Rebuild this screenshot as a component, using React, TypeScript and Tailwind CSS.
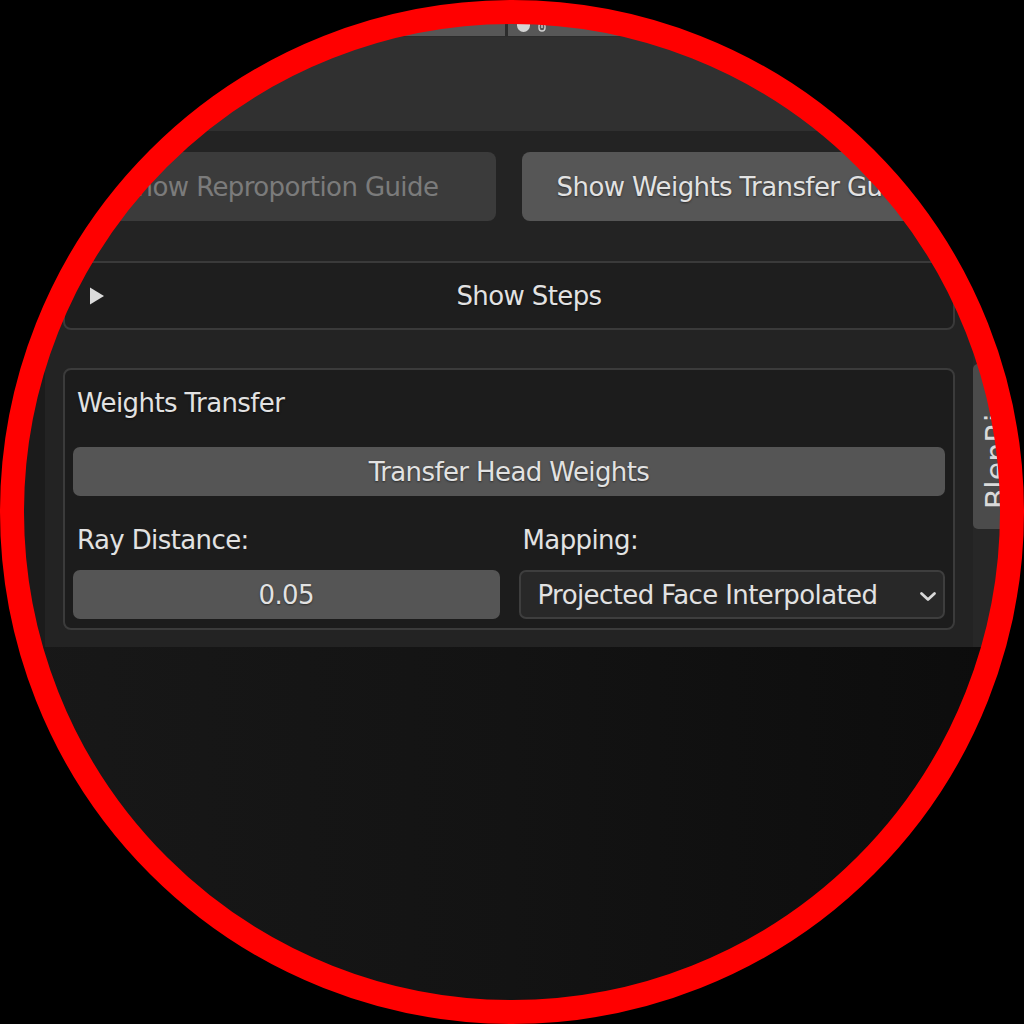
import React from "react";

function Triangle() {
  return (
    <svg width="16" height="18" viewBox="0 0 16 18" className="shrink-0">
      <polygon points="1,0.5 15,9 1,17.5" fill="#dcdcdc" />
    </svg>
  );
}

function Chevron() {
  return (
    <svg width="18" height="11" viewBox="0 0 18 11" className="shrink-0 mt-[4px]">
      <polyline points="2.5,2.5 9,8.5 15.5,2.5" fill="none" stroke="#d8d8d8" strokeWidth="2.8" strokeLinecap="round" strokeLinejoin="round" />
    </svg>
  );
}

export default function App() {
  return (
    <div className="relative w-[1024px] h-[1024px] bg-black overflow-hidden">
      <div className="w-full h-full flex flex-col [clip-path:circle(491px_at_512px_512px)] font-['DejaVu_Sans','Noto_Sans',sans-serif] text-[26px] leading-[30px] tracking-[-0.6px] text-[#e2e2e2]">
        {/* top strip */}
        <div className="h-[37px] shrink-0 flex bg-[#575757] border-b border-[#2c2c2c]">
          <div className="w-[505px]" />
          <div className="w-[3px] bg-[#2c2c2c]" />
          <div className="flex items-end gap-[8px] pl-[9px] pb-[4px]">
            <svg width="13" height="11" viewBox="0 0 13 11">
              <path d="M0 0 H13 V4.5 A6.5 6.5 0 0 1 0 4.5 Z" fill="#d4d4d4" />
            </svg>
            <svg width="8" height="10" viewBox="0 0 8 10">
              <rect x="1" y="1" width="6" height="8" rx="3" fill="none" stroke="#cfcfcf" strokeWidth="1.4" />
              <rect x="3.3" y="3" width="1.4" height="3" fill="#cfcfcf" />
            </svg>
          </div>
        </div>

        {/* header region */}
        <div className="h-[94px] shrink-0 bg-[#303030]" />

        {/* viewport + sidebar */}
        <div className="flex-1 bg-gradient-to-r from-[#181818] via-[#131313] to-[#0c0c0c]">
          <div className="flex h-[516px]">
            <div className="w-[45px] shrink-0 bg-[#1b1b1b]" />
            <div className="w-[928px] shrink-0 bg-[#232323] px-[18px] pt-[21px] flex flex-col">
              {/* guide buttons */}
              <div className="grid grid-cols-2 gap-[26px] h-[69px]">
                <div className="rounded-[8px] bg-[#3b3b3b] text-[#7b7b7b] flex items-center justify-center whitespace-nowrap">
                  Show Reproportion Guide
                </div>
                <div className="rounded-[8px] bg-[#565656] flex items-center justify-center whitespace-nowrap [text-shadow:0_1px_2px_rgba(0,0,0,0.5)]">
                  Show Weights Transfer Guide
                </div>
              </div>

              {/* show steps */}
              <div className="mt-[40px] h-[69px] rounded-[8px] border-2 border-[#3a3a3a] bg-[#1e1e1e] flex items-center pl-[24px]">
                <Triangle />
                <span className="flex-1 text-center [text-shadow:0_1px_2px_rgba(0,0,0,0.5)]">Show Steps</span>
              </div>

              {/* weights transfer box */}
              <div className="mt-[38px] h-[262px] rounded-[8px] border-2 border-[#3b3b3b] bg-[#1c1c1c] px-[8px] pt-[18px] flex flex-col">
                <div className="h-[30px] pl-[4px] [text-shadow:0_1px_2px_rgba(0,0,0,0.5)]">Weights Transfer</div>
                <div className="mt-[29px] h-[49px] rounded-[7px] bg-[#555555] flex items-center justify-center [text-shadow:0_1px_2px_rgba(0,0,0,0.5)]">
                  Transfer Head Weights
                </div>
                <div className="mt-[29px] grid grid-cols-2 gap-x-[19px] gap-y-[15px]">
                  <div className="h-[30px] pl-[4px]">Ray Distance:</div>
                  <div className="h-[30px] pl-[4px]">Mapping:</div>
                  <div className="h-[49px] rounded-[7px] bg-[#555555] flex items-center justify-center [text-shadow:0_1px_2px_rgba(0,0,0,0.5)]">
                    0.05
                  </div>
                  <div className="h-[49px] rounded-[7px] border-2 border-[#3e3e3e] bg-[#282828] flex items-center justify-between pl-[17px] pr-[6px]">
                    <span className="whitespace-nowrap">Projected Face Interpolated</span>
                    <Chevron />
                  </div>
                </div>
              </div>
            </div>

            {/* tabs column */}
            <div className="flex-1 bg-[#272727] pt-[233px]">
              <div className="h-[165px] rounded-l-[5px] bg-[#4b4b4b] flex items-end pb-[20px] pl-[8px] overflow-hidden">
                <span className="[writing-mode:vertical-rl] rotate-180 whitespace-nowrap text-[30px] leading-[32px] tracking-normal text-[#dadada]">
                  BlenRig 6
                </span>
              </div>
            </div>
          </div>
        </div>
      </div>

      {/* magnifier ring */}
      <div className="absolute inset-0 rounded-full border-[24px] border-[#ff0000] pointer-events-none" />
    </div>
  );
}
